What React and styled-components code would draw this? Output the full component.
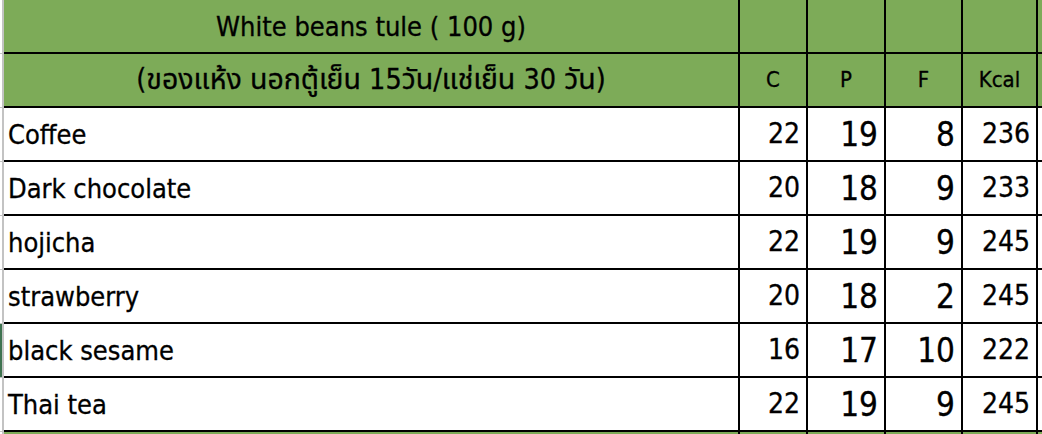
import styled, { createGlobalStyle } from "styled-components";

const GlobalStyle = createGlobalStyle`
  html, body {
    margin: 0;
    padding: 0;
    background: #fff;
    overflow: hidden;
  }
  body {
    font-family: "DejaVu Sans Condensed", "Liberation Sans", "Noto Sans Thai", "Garuda", "Loma", sans-serif;
    color: #000;
  }
`;

const Sheet = styled.div`
  display: grid;
  grid-template-columns: 4px 736px 68px 78px 77px 75px 1fr;
  grid-auto-rows: 54px;
  width: 1042px;
  height: 434px;
  overflow: hidden;
`;

const RowHead = styled.div`
  box-sizing: border-box;
  background: ${(p) => (p.$selected ? "#3f7350" : "#fff")};
  border-right: 2px solid #c3c3c3;
  border-bottom: 1px solid #c3c3c3;
`;

const Cell = styled.div`
  box-sizing: border-box;
  display: flex;
  align-items: center;
  justify-content: ${(p) => p.$align || "flex-start"};
  padding: 0 ${(p) => (p.$align === "flex-end" ? "6px" : "4px")};
  background: ${(p) => (p.$head ? "#7dab58" : "#fff")};
  border-right: 2px solid #000;
  border-bottom: 2px solid #000;
  font-size: ${(p) => p.$size || 27}px;
  -webkit-text-stroke: 0.3px #000;
  white-space: nowrap;
  line-height: 1;
`;

const rows = [
  ["Coffee", 22, 19, 8, 236],
  ["Dark chocolate", 20, 18, 9, 233],
  ["hojicha", 22, 19, 9, 245],
  ["strawberry", 20, 18, 2, 245],
  ["black sesame", 16, 17, 10, 222],
  ["Thai tea", 22, 19, 9, 245],
];

const labels = ["C", "P", "F", "Kcal"];

export default function App() {
  return (
    <>
      <GlobalStyle />
      <Sheet>
        <RowHead />
        <Cell $head $align="center" $size={27}>
          White beans tule ( 100 g)
        </Cell>
        <Cell $head />
        <Cell $head />
        <Cell $head />
        <Cell $head />
        <Cell $head />

        <RowHead />
        <Cell $head $align="center" $size={28.5}>
          (ของแห้ง นอกตู้เย็น 15วัน/แช่เย็น 30 วัน)
        </Cell>
        {labels.map((l) => (
          <Cell key={l} $head $align="center" $size={22}>
            {l}
          </Cell>
        ))}
        <Cell $head />

        {rows.map(([name, c, p, f, kcal], i) => (
          <>
            <RowHead key={`h${i}`} $selected={i === 4} />
            <Cell key={`n${i}`} $size={27}>{name}</Cell>
            <Cell key={`c${i}`} $align="flex-end" $size={28}>{c}</Cell>
            <Cell key={`p${i}`} $align="flex-end" $size={33}>{p}</Cell>
            <Cell key={`f${i}`} $align="flex-end" $size={33}>{f}</Cell>
            <Cell key={`k${i}`} $align="flex-end" $size={28}>{kcal}</Cell>
            <Cell key={`e${i}`} />
          </>
        ))}

        <RowHead />
        <Cell $head />
        <Cell $head />
        <Cell $head />
        <Cell $head />
        <Cell $head />
        <Cell $head />
      </Sheet>
    </>
  );
}
